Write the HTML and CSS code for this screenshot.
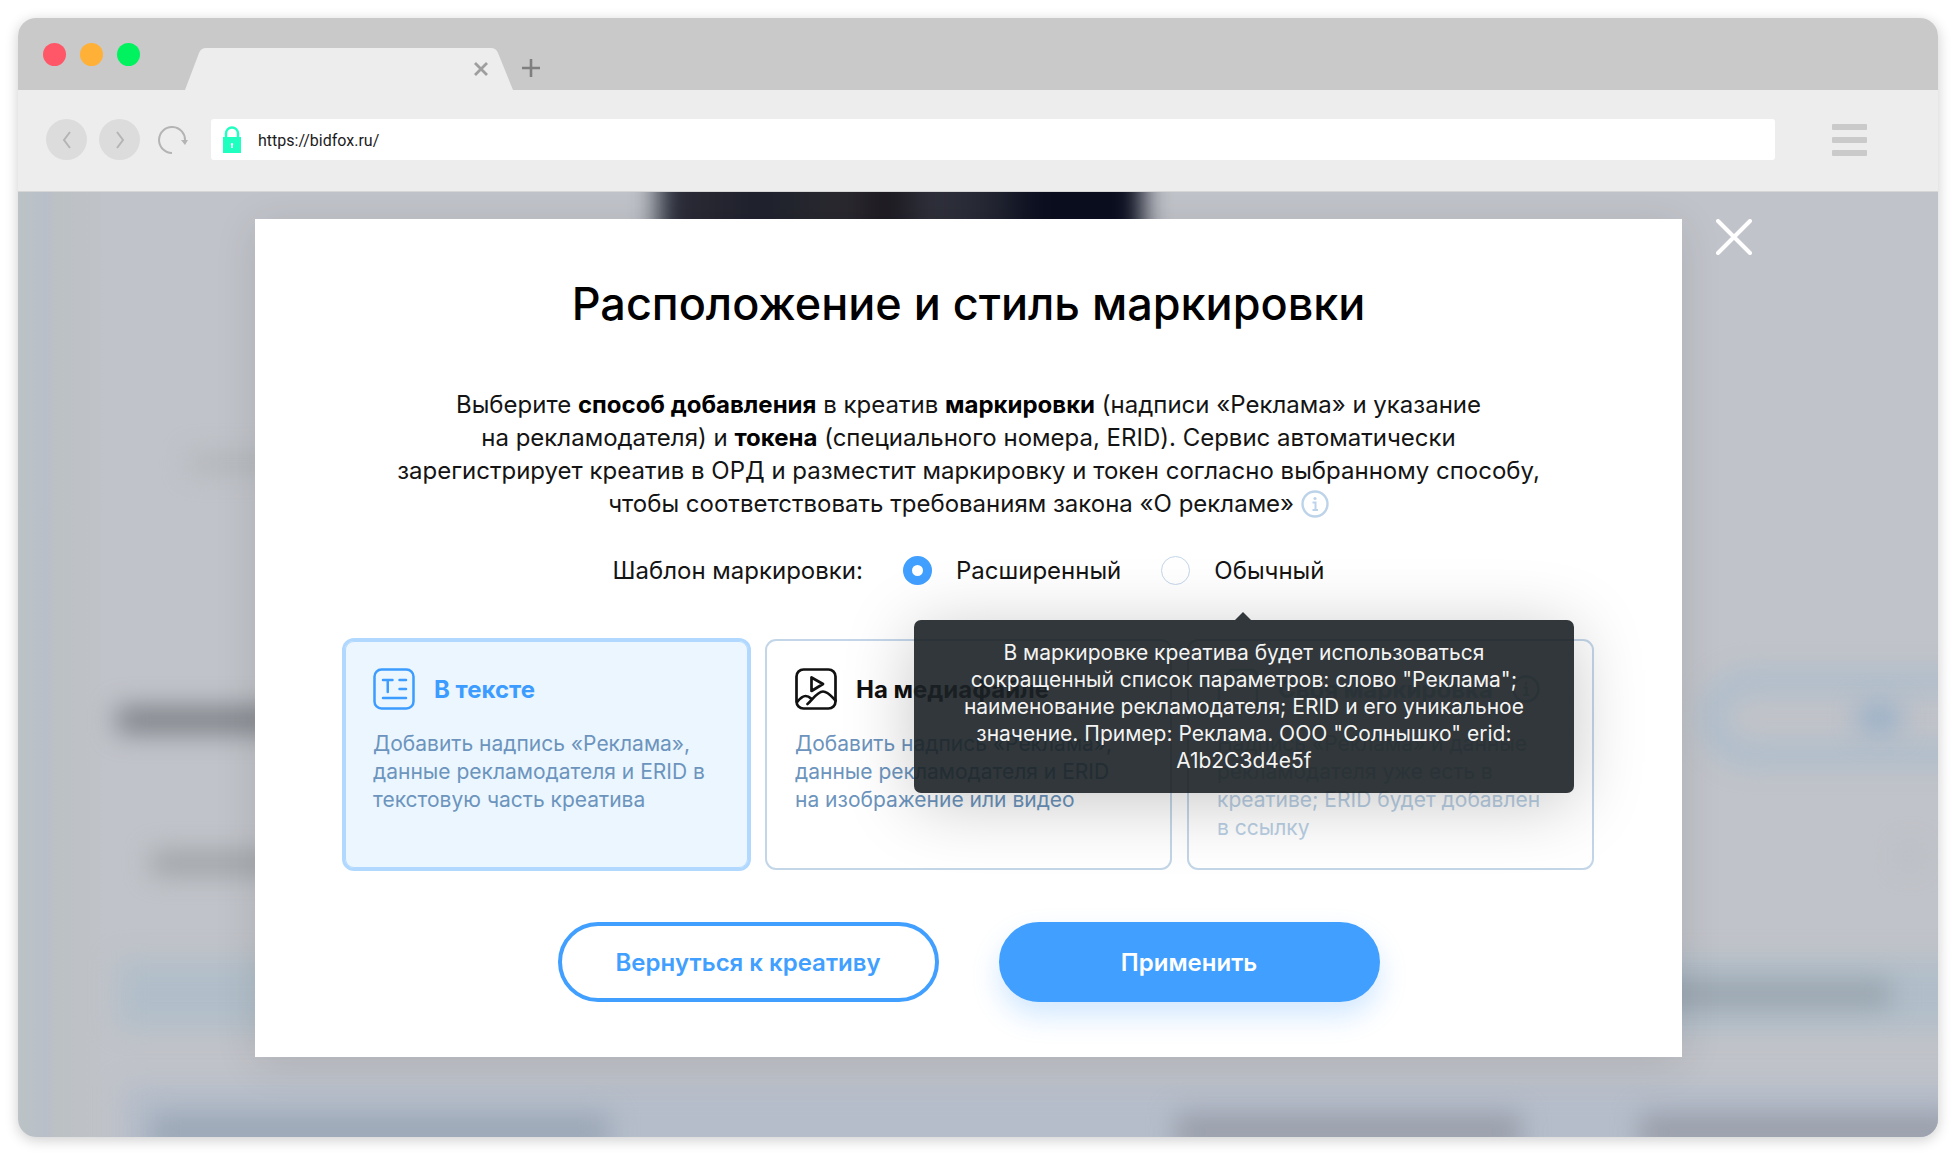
FILE: index.html
```html
<!DOCTYPE html>
<html lang="ru">
<head>
<meta charset="utf-8">
<meta name="viewport" content="width=device-width, initial-scale=1">
<title>Расположение и стиль маркировки</title>
<link rel="stylesheet" href="styles.css">
</head>
<body>
<div class="browser">
  <header class="tabs">
    <div class="lights"><i class="light red"></i><i class="light amber"></i><i class="light green"></i></div>
    <div class="tab">
      <svg class="tab-shape" viewBox="0 0 328 42" aria-hidden="true"><path fill="#ededed" d="M0 42 14 5Q16 0 21 0H306Q311 0 313 5L328 42Z"/></svg>
      <button class="plain" aria-label="Закрыть вкладку"><svg width="14" height="14" viewBox="0 0 14 14"><path d="M1 1 13 13M13 1 1 13" stroke="#9e9e9e" stroke-width="2.8"/></svg></button>
    </div>
    <button class="plain" aria-label="Новая вкладка"><svg width="18" height="18" viewBox="0 0 18 18"><path d="M9 0V18M0 9H18" stroke="#7f7f7f" stroke-width="2.6"/></svg></button>
  </header>
  <div class="toolbar">
    <button class="nav" aria-label="Назад"><svg width="10" height="18" viewBox="0 0 10 18"><path d="M8 1 2 9 8 17" fill="none" stroke="#b4b4b4" stroke-width="2"/></svg></button>
    <button class="nav" aria-label="Вперёд"><svg width="10" height="18" viewBox="0 0 10 18"><path d="M2 1 8 9 2 17" fill="none" stroke="#b4b4b4" stroke-width="2"/></svg></button>
    <button class="plain reload" aria-label="Обновить"><svg width="30" height="28" viewBox="0 0 30 28"><path d="M14 27A13 13 0 1 1 27 15" fill="none" stroke="#b4b4b4" stroke-width="2"/><path d="M23 14h7l-3 5z" fill="#b4b4b4"/></svg></button>
    <div class="address">
      <svg width="18" height="27" viewBox="0 0 18 27" aria-hidden="true"><path d="M3 12V7.500a6 6 0 0 1 12 0V12" fill="none" stroke="#1fffc0" stroke-width="2.400"/><path d="M0 11h18v16H0z" fill="#1fffc0"/><path d="M9 17a1.300 1.300 0 0 1 .8 2.300V22H8.200v-2.700A1.300 1.300 0 0 1 9 17z" fill="#fff"/></svg>
      <input type="text" value="https://bidfox.ru/" aria-label="Адрес">
    </div>
    <button class="plain menu" aria-label="Меню"><i></i><i></i><i></i></button>
  </div>

  <main class="page">
    <div class="backdrop" aria-hidden="true">
      <i class="blob photo"></i>
      <i class="blob caption"></i>
      <i class="blob heading"></i>
      <i class="blob field"></i>
      <i class="blob band"></i>
      <i class="blob band-text"></i>
      <i class="blob pill"></i>
      <i class="blob pill-text"></i>
      <i class="blob dot"></i>
      <i class="blob table"></i>
      <i class="blob cell cell-a"></i>
      <i class="blob cell cell-b"></i>
      <i class="blob cell cell-c"></i>
    </div>

    <section class="modal" role="dialog" aria-labelledby="title">
      <button class="plain close" aria-label="Закрыть"><svg width="36" height="36" viewBox="0 0 36 36"><path d="M2 2 34 34M34 2 2 34" stroke="#fff" stroke-width="4" stroke-linecap="round"/></svg></button>
      <h1 id="title">Расположение и стиль маркировки</h1>
      <p class="intro">Выберите <b>способ добавления</b> в креатив <b>маркировки</b> (надписи «Реклама» и указание<br>на рекламодателя) и <b>токена</b> (специального номера, ERID). Сервис автоматически<br>зарегистрирует креатив в ОРД и разместит маркировку и токен согласно выбранному способу,<br>чтобы соответствовать требованиям закона «О рекламе» <svg class="info" viewBox="0 0 28 28" aria-hidden="true"><circle cx="14" cy="14" r="12.500" fill="none" stroke="#bcd3ea" stroke-width="2.400"/><circle cx="14" cy="8.500" r="1.600" fill="#bcd3ea"/><path d="M11.500 12.500H14.500V20M11.500 20H17" fill="none" stroke="#bcd3ea" stroke-width="2"/></svg></p>

      <div class="template" role="radiogroup" aria-labelledby="tpl">
        <span id="tpl">Шаблон маркировки:</span>
        <label class="option"><input type="radio" name="tpl" checked>Расширенный</label>
        <div class="tip-anchor">
          <label class="option"><input type="radio" name="tpl">Обычный</label>
          <div class="tooltip" role="tooltip">В маркировке креатива будет использоваться<br>сокращенный список параметров: слово "Реклама";<br>наименование рекламодателя; ERID и его уникальное<br>значение. Пример: Реклама. ООО "Солнышко" erid:<br>A1b2C3d4e5f</div>
        </div>
      </div>

      <div class="cards">
        <button class="card selected" aria-pressed="true">
          <span class="card-head">
            <svg width="42" height="42" viewBox="0 0 42 42" fill="none" stroke="currentColor" stroke-width="2.500" stroke-linecap="round"><rect x="1.500" y="1.500" width="39" height="39" rx="7"/><path d="M10 12h9.500M14.750 12v12M26.500 12h6.500M26.500 21h6.500M10 30h23"/></svg>
            <strong>В тексте</strong>
          </span>
          <span class="desc">Добавить надпись «Реклама»,<br>данные рекламодателя и ERID в<br>текстовую часть креатива</span>
        </button>
        <button class="card" aria-pressed="false">
          <span class="card-head">
            <svg width="42" height="42" viewBox="0 0 42 42" fill="none" stroke="currentColor" stroke-width="2.700" stroke-linecap="round" stroke-linejoin="round"><rect x="1.500" y="1.500" width="39" height="39" rx="7"/><path d="M16.500 9.500v13.500l11.500-7zM2 34c3-3.500 6-6 8.500-6s4 1 5.500 2.500M12.500 36c4-3 9.500-12.500 15.500-12.500 5 0 8.500 5 12.500 9"/></svg>
            <strong>На медиафайле</strong>
          </span>
          <span class="desc">Добавить надпись «Реклама»,<br>данные рекламодателя и ERID<br>на изображение или видео</span>
        </button>
        <button class="card" disabled>
          <span class="card-head">
            <svg width="42" height="42" viewBox="0 0 42 42" fill="none" stroke="currentColor" stroke-width="2.500" stroke-linecap="round" stroke-linejoin="round"><path d="M29 40H8a6 6 0 0 1-6-6V14L14 2h20a6 6 0 0 1 6 6v26a6 6 0 0 1-6 6h-5M14 2v12H2"/></svg>
            <strong>Своя маркировка</strong>
            <svg width="28" height="28" viewBox="0 0 28 28" fill="none" stroke="currentColor"><circle cx="14" cy="14" r="12.500" stroke-width="2.400"/><path d="M14 7v3M11.500 12.500H14.500V20M11.500 20H17" stroke-width="2"/></svg>
          </span>
          <span class="desc">Надпись «Реклама» и данные<br>рекламодателя уже есть в<br>креативе; ERID будет добавлен<br>в ссылку</span>
        </button>
      </div>

      <div class="actions">
        <button class="btn outline">Вернуться к креативу</button>
        <button class="btn solid">Применить</button>
      </div>
    </section>
  </main>
</div>
</body>
</html>
```
FILE: styles.css
```css
* { box-sizing: border-box; }

body {
  margin: 0;
  padding: 18px 18px 19px;
  background: #fff;
  color: #000;
  font: 24px/33px Inter, "Liberation Sans", sans-serif;
}

button { font: inherit; color: inherit; cursor: pointer; }
.plain { padding: 0; border: 0; background: none; display: flex; }

/* browser frame */
.browser {
  border-radius: 18px;
  overflow: hidden;
  box-shadow: 0 3px 14px rgba(0, 0, 0, .2);
}

.tabs {
  display: flex;
  align-items: center;
  height: 72px;
  padding-left: 25px;
  background: #c9c9c9;
}
.lights { display: flex; gap: 14px; width: 142px; }
.light { width: 23px; height: 23px; border-radius: 50%; }
.red { background: #ff5768; }
.amber { background: #ffb036; }
.green { background: #00f25e; }

.tab {
  position: relative;
  align-self: flex-end;
  display: flex;
  align-items: center;
  justify-content: flex-end;
  width: 328px;
  height: 42px;
  padding-right: 25px;
  margin-right: 9px;
}
.tab-shape { position: absolute; inset: 0; width: 100%; height: 100%; }
.tab .plain { position: relative; }
.tabs > .plain { align-self: flex-end; padding-bottom: 13px; }

.toolbar {
  display: flex;
  align-items: center;
  height: 102px;
  padding: 0 71px 2px 28px;
  background: #ededed;
  border-bottom: 1px solid #d6d6d6;
}
.nav {
  display: flex;
  align-items: center;
  justify-content: center;
  width: 41px;
  height: 41px;
  margin-right: 12px;
  padding: 0;
  border: 0;
  border-radius: 50%;
  background: #dcdcdc;
}
.reload { margin: 0 23px 0 6px; }
.address {
  flex: 1;
  display: flex;
  align-items: center;
  gap: 17px;
  height: 41px;
  padding: 0 12px;
  background: #fff;
  border-radius: 3px;
}
.address input {
  flex: 1;
  height: 26px;
  padding: 2px 0 0;
  border: 0;
  background: none;
  color: #1c1c1c;
  font: 16px/24px Roboto, sans-serif;
  outline: 0;
}
.menu { flex-direction: column; gap: 7px; margin-left: 57px; }
.menu i { width: 35px; height: 6px; border-radius: 1px; background: #cacaca; }

/* page behind the dialog */
.page {
  position: relative;
  overflow: hidden;
  padding: 27px 256px 80px 237px;
}
.backdrop {
  position: absolute;
  inset: 0;
  background: linear-gradient(90deg, #bbc3c6, #b9bfc8 28px, #bcc1c4 40px, #c0c3c9 90px);
}
.blob { position: absolute; filter: blur(13px); }
.photo {
  left: 640px; top: -40px; width: 485px; height: 110px;
  background: linear-gradient(90deg, #28303e, #2a2833 40px, #1e222d 100px, #2c2a30 190px, #1b191f 230px, #30313c 270px, #262934 330px, #0a0e1f 380px);
}
.caption { left: 172px; top: 262px; width: 200px; height: 18px; background: #b1b5b9; }
.heading { left: 99px; top: 515px; width: 240px; height: 26px; background: #7c8086; }
.field { left: 134px; top: 660px; width: 200px; height: 22px; background: #9da1a4; }
.band { left: 100px; right: -30px; top: 768px; height: 68px; background: #b1bec9; }
.band-text { right: 47px; width: 420px; top: 788px; height: 28px; background: #99a4ae; }
.pill {
  left: 1686px; right: -80px; top: 480px; height: 92px;
  border: 18px solid #a9bccd;
  border-radius: 46px;
}
.pill-text { right: 38px; width: 42px; top: 512px; height: 28px; background: #98b0c8; }
.dot { right: 18px; width: 20px; top: 654px; height: 20px; background: #b9bdc3; }
.table { left: 105px; right: -30px; bottom: -30px; height: 82px; background: #b5bdca; }
.cell { bottom: -14px; height: 38px; background: #9a9fab; }
.cell-a { left: 132px; width: 460px; background: #9ca8b7; }
.cell-b { left: 1158px; width: 345px; }
.cell-c { left: 1622px; right: -20px; }

/* dialog */
.modal {
  position: relative;
  padding: 57px 88px 55px;
  background: #fff;
  box-shadow: 0 6px 40px rgba(0, 0, 0, .1);
  text-align: center;
}
.close { position: absolute; left: calc(100% + 34px); top: 0; }

h1 { margin: 0 0 56px; font-size: 45px; line-height: 56px; font-weight: 500; }
.intro { margin: 0 0 35px; color: #141414; }
.intro b { color: #000; font-weight: 700; }
.info { width: 28px; height: 28px; vertical-align: -6px; }

.template {
  display: flex;
  align-items: center;
  justify-content: center;
  gap: 40px;
  height: 30px;
  margin-bottom: 54px;
  color: #141414;
}
.option { display: flex; align-items: center; gap: 24px; cursor: pointer; }
.option input {
  appearance: none;
  width: 29px;
  height: 29px;
  margin: 0;
  border: 1px solid #c3d6ea;
  border-radius: 50%;
  background: #fff;
}
.option input:checked { border: 9px solid #419fff; }

.tip-anchor { position: relative; }
.tooltip {
  position: absolute;
  z-index: 2;
  left: 50%;
  top: 66px;
  width: 660px;
  margin-left: -329px;
  padding: 19px 20px;
  border-radius: 7px;
  background: rgba(27, 33, 37, .9);
  box-shadow: 0 10px 70px rgba(0, 0, 0, .22);
  color: #f4f4f4;
  font-size: 21px;
  line-height: 27px;
}
.tooltip::before {
  content: "";
  position: absolute;
  left: 50%;
  bottom: 100%;
  margin-left: -9px;
  border: 8px solid transparent;
  border-top: 0;
  border-bottom-color: #32373b;
}

.cards { display: grid; grid-template-columns: repeat(3, 1fr); gap: 15px; margin-bottom: 52px; }
.card {
  display: flex;
  flex-direction: column;
  gap: 20px;
  padding: 27px 10px 26px 28px;
  border: 2px solid #c3d6e8;
  border-radius: 11px;
  background: #fff;
  color: #111;
  text-align: left;
}
.card-head { display: flex; align-items: center; gap: 19px; }
.card-head strong { font-weight: 700; }
.desc { color: #6c94bd; font-size: 21px; line-height: 28px; white-space: nowrap; }
.selected {
  border-color: #b1d8ff;
  box-shadow: 0 0 0 1px #b1d8ff, inset 0 0 0 1px #b1d8ff;
  background: #ebf6ff;
  color: #3d9cff;
}
.card:disabled { color: #b9cfe4; cursor: default; }
.card:disabled .desc { color: #b9cfe4; }

.actions { display: flex; justify-content: center; gap: 60px; }
.btn {
  width: 381px;
  height: 80px;
  padding: 0;
  border: 4px solid #419fff;
  border-radius: 40px;
  font-weight: 600;
}
.outline { background: #fff; color: #419fff; }
.solid { background: #419fff; color: #fff; box-shadow: 0 14px 28px rgba(65, 159, 255, .24); }
```
